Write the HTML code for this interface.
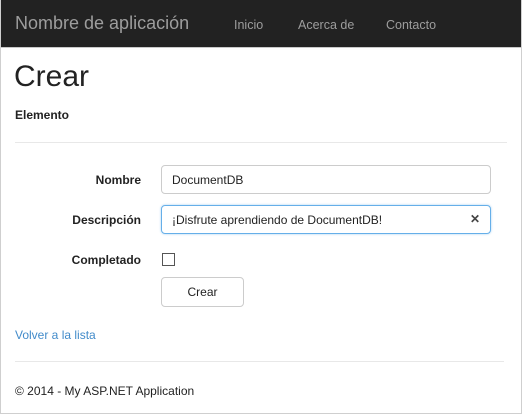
<!DOCTYPE html>
<html><head><meta charset="utf-8"><style>
*{box-sizing:border-box;margin:0;padding:0}
body{width:522px;height:414px;overflow:hidden;background:#fff;font-family:"Segoe UI","Liberation Sans",sans-serif;font-size:12px;color:#222;position:relative}
.frame{position:absolute;left:0;top:0;width:522px;height:414px;border:1px solid #cfcfcf;border-top:none}
.nav{position:absolute;left:1px;top:0;width:520px;height:48px;background:#222;border-bottom:1px solid #c8c8c8;color:#9d9d9d}
.nav span{position:absolute;top:18px;font-size:12.5px}
.brand{position:absolute;left:14px;top:13px;font-size:18px;color:#9d9d9d}
.a{position:absolute}
h1{position:absolute;left:14px;top:60px;font-size:30px;font-weight:normal;color:#222}
.hr{position:absolute;left:15px;height:1px;background:#e8e8e8}
.lbl{position:absolute;right:381px;font-weight:bold;font-size:12px}
.inp{position:absolute;left:161px;width:330px;height:29px;border:1px solid #ccc;border-radius:4px;padding:7px 10px;font-size:12px}
</style></head><body>
<div class="frame"></div>
<div class="nav">
<div class="brand">Nombre de aplicación</div>
<span style="left:233px">Inicio</span>
<span style="left:297px">Acerca de</span>
<span style="left:385px">Contacto</span>
</div>
<h1>Crear</h1>
<div class="a" style="left:15px;top:108px;font-weight:bold">Elemento</div>
<div class="hr" style="top:142px;width:492px"></div>
<div class="lbl" style="top:173px">Nombre</div>
<div class="inp" style="top:165px">DocumentDB</div>
<div class="lbl" style="top:213px">Descripción</div>
<div class="inp" style="top:205px;border-color:#66afe9;box-shadow:0 0 2px rgba(102,175,233,.6)">¡Disfrute aprendiendo de DocumentDB!<span style="position:absolute;right:10px;top:6px;font-weight:bold;color:#444">✕</span></div>
<div class="lbl" style="top:253px">Completado</div>
<div class="a" style="left:162px;top:253px;width:13px;height:13px;border:1px solid #555"></div>
<div class="a" style="left:161px;top:277px;width:83px;height:30px;border:1px solid #ccc;border-radius:4px;text-align:center;line-height:28px">Crear</div>
<div class="a" style="left:15px;top:328px;color:#428bca">Volver a la lista</div>
<div class="hr" style="top:361px;width:489px"></div>
<div class="a" style="left:15px;top:384px">© 2014 - My ASP.NET Application</div>
</body></html>
